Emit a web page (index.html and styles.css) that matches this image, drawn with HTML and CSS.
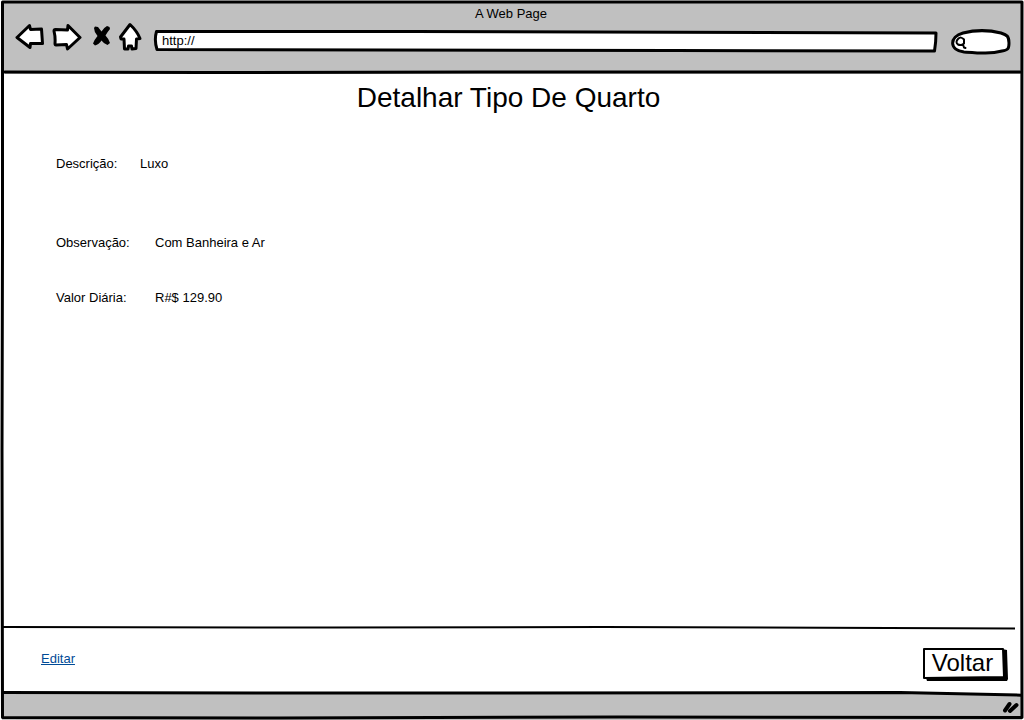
FILE: index.html
```html
<!DOCTYPE html>
<html lang="pt-BR">
<head>
<meta charset="utf-8">
<meta name="viewport" content="width=device-width, initial-scale=1">
<title>Detalhar Tipo De Quarto</title>
<link rel="stylesheet" href="styles.css">
</head>
<body>
<div class="window">
  <header class="chrome">
    <div class="window-title">A Web Page</div>
    <div class="toolbar">
      <nav class="nav-buttons">
        <button class="icon-button" type="button" aria-label="Voltar">
          <svg width="30" height="30" viewBox="14 22 30 30"><path class="ink" d="M17 37.500L29.500 25.500L30.500 29.500L41.500 29L42.500 43.500L30.500 43.500L30 47.500Z"/></svg>
        </button>
        <button class="icon-button" type="button" aria-label="Avançar">
          <svg width="30" height="30" viewBox="52 22 30 30"><path class="ink" d="M54 31Q54 29.500 55.500 29.500L67.500 30L68 25.500L80 37.500L67.500 49L66.500 44.500L56 45Q55 45 55 43.500Q55.500 37 54 31Z"/></svg>
        </button>
        <button class="icon-button" type="button" aria-label="Parar">
          <svg width="20" height="30" viewBox="90 22 20 30"><path d="M94 28L95 26.500L98 27L101.500 31.500Q104 27.500 107 26L109.500 27L110 29Q107 32.500 105.500 35.500Q108.500 38.500 110 43L107.500 45Q104 44 101.500 40.500Q99 44.500 95 45.500L93 43.500Q94.500 39.500 97.500 36Q94 32 94 28Z"/></svg>
        </button>
        <button class="icon-button" type="button" aria-label="Início">
          <svg width="24" height="30" viewBox="118 22 24 30"><path class="ink" d="M130 24.500L120.500 37L121 39L124 39L124.500 49L128 49L128.500 46L131.500 46L132 49L136 48.500L136.500 39L140 38.500Q137 31 130 24.500Z"/></svg>
        </button>
      </nav>
      <div class="address">
        <svg class="sketch" viewBox="0 0 784 22" preserveAspectRatio="none" aria-hidden="true"><path class="ink address-shape" d="M2.500 1.500L260 1.500L783 3Q783 12 781.500 21L520 20.500L3 19.500Q0 10 2.500 1.500Z"/></svg>
        <input class="address-input" type="text" value="http://" aria-label="Endereço">
      </div>
      <div class="search">
        <svg class="sketch" viewBox="0 0 62 26" preserveAspectRatio="none" aria-hidden="true"><path class="ink pill" d="M12 4C24 1 38 1 50 4C56 6 58 7 58 14C58 20 57 21 51 22C40 25 28 24 13 23C-2 21 -2 8 12 4Z"/></svg>
        <svg class="lens" width="12" height="14" viewBox="0 0 12 14" aria-hidden="true"><path class="ink" d="M3 3Q6 0 9 3.500L9 7.500Q6 10 3 8.500Q0 6 3 3ZM8 8.500L9 11.500L10.500 12"/></svg>
        <input class="search-input" type="search" aria-label="Pesquisar">
      </div>
    </div>
    <svg class="header-line" viewBox="0 0 1024 4" preserveAspectRatio="none" aria-hidden="true"><path class="ink" d="M3 2L200 2.500L480 2L1022 2"/></svg>
  </header>
  <main class="page">
    <h1 class="heading">Detalhar Tipo De Quarto</h1>
    <dl class="details">
      <div class="detail lead"><dt>Descrição:</dt><dd>Luxo</dd></div>
      <div class="detail"><dt>Observação:</dt><dd>Com Banheira e Ar</dd></div>
      <div class="detail"><dt>Valor Diária:</dt><dd>R#$ 129.90</dd></div>
    </dl>
  </main>
  <div class="actions">
    <svg class="rule" viewBox="0 0 1012 4" preserveAspectRatio="none" aria-hidden="true"><path class="ink thin" d="M0 1L330 1.500L600 1L1012 2.500"/></svg>
    <a class="edit" href="#editar">Editar</a>
    <button class="back" type="button">
      <svg class="sketch" viewBox="0 0 86 34" preserveAspectRatio="none" aria-hidden="true"><path d="M4 30L81 29L80 1L85 2L86 31L85 33L40 33L5 33Z"/><path class="ink thin" d="M2 1L81 1L82 29L2 30Z"/></svg>
      <span class="back-label">Voltar</span>
    </button>
  </div>
  <footer class="status">
    <svg class="sketch" viewBox="0 0 1024 29" preserveAspectRatio="none" aria-hidden="true"><path class="bar" d="M2 2.500L300 3L900 2.500L1022 5.500L1022 29L2 29Z"/><path class="ink open" d="M3 2.500L300 3L900 2.500L1021 5"/></svg>
    <svg class="grip" width="18" height="14" viewBox="0 0 18 14" aria-hidden="true"><path class="ink" d="M4 10.500L8.500 4M9 11L15.500 5"/></svg>
  </footer>
  <svg class="frame" viewBox="0 0 1024 720" preserveAspectRatio="none" aria-hidden="true"><path class="ink" d="M2.500 2L1022 2L1021.500 420L1022 717.500L620 717L280 718L2.500 717.500L2 450L2.500 240Z"/></svg>
</div>
</body>
</html>
```
FILE: styles.css
```css
* {
  box-sizing: border-box;
}

body {
  margin: 0;
  background: #fff;
  color: #000;
  font: 13px/16px "Liberation Sans", Arial, sans-serif;
}

button,
input {
  margin: 0;
  padding: 0;
  border: 0;
  background: none;
  color: inherit;
  font: inherit;
}

svg {
  display: block;
}

.ink {
  fill: #fff;
  stroke: #000;
  stroke-width: 3px;
  stroke-linejoin: round;
  stroke-linecap: round;
  vector-effect: non-scaling-stroke;
}

.thin {
  stroke-width: 2px;
}

.window {
  position: relative;
  display: flex;
  flex-direction: column;
  min-height: 100vh;
}

.frame {
  position: absolute;
  inset: 0;
  width: 100%;
  height: 100%;
  pointer-events: none;
}

.frame .ink,
.header-line .ink,
.rule .ink,
.open {
  fill: none;
}

.chrome {
  margin: 2px 2px 0;
  background: #c0c0c0;
}

.window-title {
  padding: 4px 2px 0 0;
  text-align: center;
}

.toolbar {
  display: flex;
  align-items: flex-start;
  gap: 14px;
  height: 46px;
  padding: 0 9px 0 12px;
}

.nav-buttons {
  display: flex;
  gap: 8px;
  margin-right: -2px;
}

.address,
.search {
  position: relative;
  display: flex;
  align-items: center;
}

.address {
  flex: 1;
  height: 22px;
  margin-top: 8px;
}

.address-input {
  position: relative;
  width: 100%;
  padding: 0 8px;
}

.sketch {
  position: absolute;
  inset: 0;
  width: 100%;
  height: 100%;
  overflow: visible;
}

.search {
  width: 62px;
  height: 26px;
  margin-top: 7px;
}

.lens {
  position: relative;
  flex: none;
  margin: 2px 0 0 4px;
}

.lens .ink {
  stroke-width: 2px;
}

.search-input {
  position: relative;
  flex: 1;
  min-width: 0;
  margin: 0 8px 0 2px;
}

.header-line {
  width: 100%;
  height: 4px;
  margin-top: 2px;
  overflow: visible;
}

.page {
  flex: 1;
  padding: 8px 56px 32px;
}

.heading {
  margin: 0 0 42px;
  padding-right: 7px;
  font-size: 28px;
  font-weight: 400;
  line-height: 32px;
  text-align: center;
}

.details {
  display: flex;
  flex-direction: column;
  gap: 39px;
  margin: 0;
}

.detail {
  display: flex;
}

.detail dt {
  width: 99px;
}

.detail dd {
  margin: 0;
}

.lead {
  margin-bottom: 24px;
}

.lead dt {
  width: 84px;
}

.actions {
  display: flex;
  flex-wrap: wrap;
  justify-content: space-between;
  align-items: flex-start;
  padding: 0 16px 8px 41px;
}

.rule {
  flex: none;
  width: calc(100% + 46px);
  height: 4px;
  margin: 0 -7px 18px -39px;
}

.edit {
  margin-top: 3px;
  color: #004b97;
}

.back {
  position: relative;
  width: 86px;
  height: 34px;
}

.back-label {
  position: relative;
  display: block;
  padding: 0 5px 4px 0;
  font-size: 24px;
  line-height: 28px;
}

.status {
  position: relative;
  display: flex;
  justify-content: flex-end;
  align-items: flex-end;
  height: 30px;
  padding: 0 5px 6px 0;
}

.bar {
  fill: #c0c0c0;
}

.grip {
  position: relative;
}

.grip .ink {
  stroke-width: 4px;
}
```
